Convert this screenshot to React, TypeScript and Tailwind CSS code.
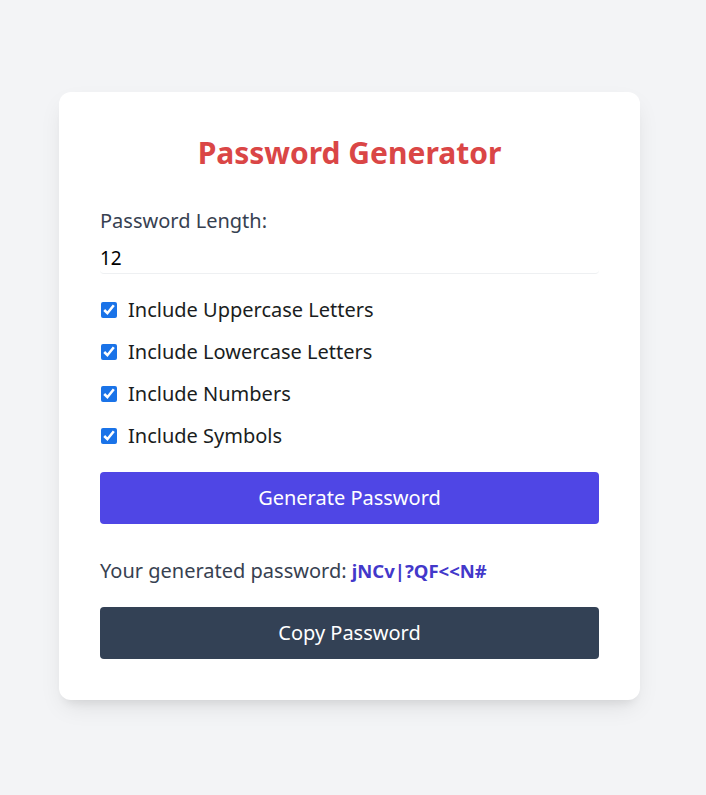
import React, { useState } from 'react';

const options = [
    { key: 'upper', label: 'Include Uppercase Letters' },
    { key: 'lower', label: 'Include Lowercase Letters' },
    { key: 'numbers', label: 'Include Numbers' },
    { key: 'symbols', label: 'Include Symbols' },
];

export default function App() {
    const [length, setLength] = useState('12');
    const [checked, setChecked] = useState<Record<string, boolean>>({
        upper: true,
        lower: true,
        numbers: true,
        symbols: true,
    });
    const password = 'jNCv|?QF<<N#';

    return (
        <div className="min-h-screen bg-[#f3f4f6] pt-[92px] font-['Noto_Sans',sans-serif]">
            <div className="ml-[59px] w-[581px] rounded-xl bg-white px-[41px] pt-[43px] pb-[41px] shadow-[0_10px_25px_-5px_rgba(0,0,0,0.1),0_8px_10px_-6px_rgba(0,0,0,0.08)]">
                <h1 className="text-center text-[30px] leading-9 font-bold text-[#da4646]">Password Generator</h1>

                <label htmlFor="length" className="mt-[36px] block text-[20px] leading-7 text-[#374151]">
                    Password Length:
                </label>
                <input
                    id="length"
                    type="text"
                    value={length}
                    onChange={(e) => setLength(e.target.value)}
                    className="mt-[3px] block h-9 w-full rounded border-b border-[#eef0f2] pt-[6px] pb-[2px] text-[19px] leading-7 text-black outline-none"
                />

                <div className="mt-[22px] flex flex-col gap-[14px]">
                    {options.map((o) => (
                        <label key={o.key} className="flex h-7 items-center gap-[11px] text-[20px] text-[#1a1d21]">
                            <input
                                type="checkbox"
                                checked={checked[o.key]}
                                onChange={() => setChecked({ ...checked, [o.key]: !checked[o.key] })}
                                className="ml-px h-4 w-4 accent-[#1a73e8]"
                            />
                            {o.label}
                        </label>
                    ))}
                </div>

                <button className="mt-[22px] block h-[52px] w-full rounded bg-[#4f46e5] text-[20px] text-white">Generate Password</button>

                <p className="mt-[33px] text-[20px] leading-7 text-[#374151]">
                    Your generated password: <span className="text-[18.5px] font-bold text-[#4338ca]">{password}</span>
                </p>

                <button className="mt-[22px] block h-[52px] w-full rounded bg-[#334155] text-[20px] text-white">Copy Password</button>
            </div>
        </div>
    );
}
